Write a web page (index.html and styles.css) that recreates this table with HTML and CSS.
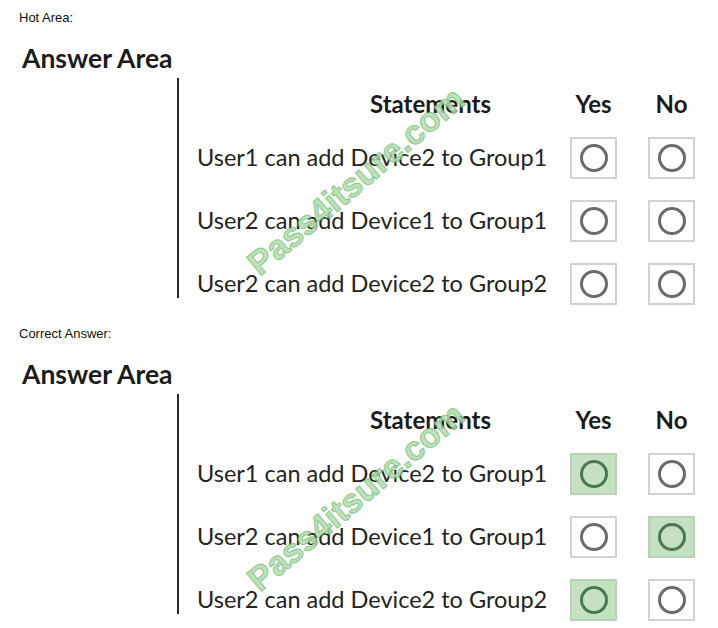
FILE: index.html
```html
<!DOCTYPE html>
<html>
<head>
<meta charset="utf-8">
<link rel="stylesheet" href="styles.css">
</head>
<body>
<div class="page">
  <section class="block">
    <p class="label">Hot Area:</p>
    <h2 class="title">Answer Area</h2>
    <div class="area">
      <div class="rule"></div>
      <div class="grid">
        <div class="h-stmt">Statements</div><div class="h-opt">Yes</div><div class="h-opt">No</div>
        <div class="stmt">User1 can add Device2 to Group1</div>
        <div class="box"><svg class="dot" viewBox="0 0 30 30"><circle cx="15" cy="15" r="12.5"/></svg></div>
        <div class="box"><svg class="dot" viewBox="0 0 30 30"><circle cx="15" cy="15" r="12.5"/></svg></div>
        <div class="stmt">User2 can add Device1 to Group1</div>
        <div class="box"><svg class="dot" viewBox="0 0 30 30"><circle cx="15" cy="15" r="12.5"/></svg></div>
        <div class="box"><svg class="dot" viewBox="0 0 30 30"><circle cx="15" cy="15" r="12.5"/></svg></div>
        <div class="stmt">User2 can add Device2 to Group2</div>
        <div class="box"><svg class="dot" viewBox="0 0 30 30"><circle cx="15" cy="15" r="12.5"/></svg></div>
        <div class="box"><svg class="dot" viewBox="0 0 30 30"><circle cx="15" cy="15" r="12.5"/></svg></div>
      </div>
    </div>
    <div class="wm">Pass4itsure.com</div>
  </section>
  <section class="block">
    <p class="label">Correct Answer:</p>
    <h2 class="title">Answer Area</h2>
    <div class="area">
      <div class="rule"></div>
      <div class="grid">
        <div class="h-stmt">Statements</div><div class="h-opt">Yes</div><div class="h-opt">No</div>
        <div class="stmt">User1 can add Device2 to Group1</div>
        <div class="box on"><svg class="dot" viewBox="0 0 30 30"><circle cx="15" cy="15" r="12.5"/></svg></div>
        <div class="box"><svg class="dot" viewBox="0 0 30 30"><circle cx="15" cy="15" r="12.5"/></svg></div>
        <div class="stmt">User2 can add Device1 to Group1</div>
        <div class="box"><svg class="dot" viewBox="0 0 30 30"><circle cx="15" cy="15" r="12.5"/></svg></div>
        <div class="box on"><svg class="dot" viewBox="0 0 30 30"><circle cx="15" cy="15" r="12.5"/></svg></div>
        <div class="stmt">User2 can add Device2 to Group2</div>
        <div class="box on"><svg class="dot" viewBox="0 0 30 30"><circle cx="15" cy="15" r="12.5"/></svg></div>
        <div class="box"><svg class="dot" viewBox="0 0 30 30"><circle cx="15" cy="15" r="12.5"/></svg></div>
      </div>
    </div>
    <div class="wm">Pass4itsure.com</div>
  </section>
</div>
</body>
</html>
```
FILE: styles.css
```css
html, body {
  margin: 0;
  padding: 0;
  background: #ffffff;
}

.page {
  width: 718px;
}

.block {
  position: relative;
  height: 316px;
  padding-top: 10px;
  box-sizing: border-box;
}

.label {
  margin: 0;
  padding-left: 19px;
  font: 13px/15px "Liberation Sans", Arial, sans-serif;
  color: #111;
}

.title {
  margin: 16px 0 0 22px;
  font: 700 26.5px/34px Lato, "Open Sans", sans-serif;
  color: #1b1b1b;
}

.area {
  display: flex;
  margin-top: 3px;
  margin-left: 177px;
}

.rule {
  width: 2px;
  height: 220px;
  background: #2a2a2a;
  flex: none;
}

.grid {
  display: grid;
  grid-template-columns: 391px 78px 47px;
  grid-template-rows: 38px 42px 42px 42px;
  row-gap: 21px;
}

.h-stmt,
.h-opt {
  margin-top: 11px;
  font: 700 24px/30px Lato, "Open Sans", sans-serif;
  color: #1b1b1b;
}

.h-stmt {
  padding-left: 191px;
}

.h-opt {
  width: 47px;
  text-align: center;
}

.stmt {
  padding-left: 18px;
  font: 400 23.5px/40px Lato, "Open Sans", sans-serif;
  color: #232323;
  white-space: nowrap;
}

.box {
  width: 47px;
  height: 42px;
  box-sizing: border-box;
  border: 2px solid #d2d2d2;
  background: #fff;
  display: flex;
  align-items: center;
  justify-content: center;
}

.dot {
  width: 30px;
  height: 30px;
}

.dot circle {
  fill: none;
  stroke: #6b6b6b;
  stroke-width: 3;
}

.box.on {
  background: #c6e0c4;
  border-color: #b8d2b6;
}

.box.on .dot circle {
  stroke: #4a7a4c;
}

.wm {
  position: absolute;
  left: 356px;
  top: 181px;
  transform: translate(-50%, -50%) rotate(-40deg);
  font: 700 34px "Liberation Sans", Arial, sans-serif;
  color: #b2dcae;
  -webkit-text-stroke: 1px #7cbf7a;
  white-space: nowrap;
  opacity: 0.85;
  pointer-events: none;
}
```
